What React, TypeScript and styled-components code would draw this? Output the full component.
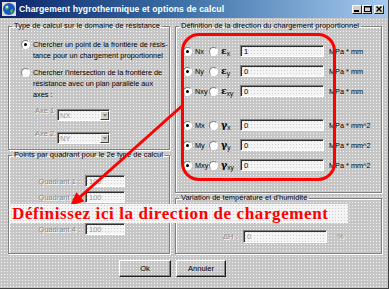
import styled, { createGlobalStyle } from "styled-components";

const GlobalStyle = createGlobalStyle`
  html, body {
    margin: 0;
    padding: 0;
    background: #c8c8c8;
  }
  body {
    font-family: "Liberation Sans", Arial, sans-serif;
    font-size: 7.5px;
    color: #000;
  }
`;

const dither = `
  background-color: #c6c6c6;
  background-image: radial-gradient(circle, #f4f4f4 0.6px, transparent 0.9px);
  background-size: 3px 3px;
`;

const whiteDither = `
  background-color: #f4f4f4;
  background-image: radial-gradient(circle, #d0d0d0 0.5px, transparent 0.8px);
  background-size: 3px 3px;
`;

const Window = styled.div`
  position: relative;
  width: 389px;
  height: 289px;
  box-sizing: border-box;
  border-right: 1px solid #404040;
  border-bottom: 1px solid #404040;
  overflow: hidden;
  display: flex;
  flex-direction: column;
  ${dither}
`;

const TitleBar = styled.div`
  height: 18px;
  display: flex;
  align-items: center;
  gap: 3px;
  padding: 0 3px 0 2px;
  background: linear-gradient(90deg, #0a246a 0%, #3a6ea5 45%, #a6caf0 100%);
`;

const Title = styled.span`
  flex: 1;
  color: #fff;
  font-weight: bold;
  font-size: 8.6px;
  letter-spacing: 0.1px;
`;

const CaptionGroup = styled.div`
  display: flex;
  gap: 2px;
  margin-right: 1px;
`;

const CaptionPair = styled.div`
  display: flex;
`;

const CaptionButton = styled.div`
  width: 10px;
  height: 9px;
  box-sizing: border-box;
  display: flex;
  align-items: center;
  justify-content: center;
  border-top: 1px solid #fff;
  border-left: 1px solid #fff;
  border-right: 1px solid #202020;
  border-bottom: 1px solid #202020;
  background: #d4d0c8;
`;

const Body = styled.div`
  display: grid;
  grid-template-columns: 162px 207px;
  column-gap: 5px;
  padding: 3px 0 0 8px;
`;

const Column = styled.div`
  display: flex;
  flex-direction: column;
`;

const GroupBox = styled.fieldset<{ $h: number }>`
  margin: 0;
  padding: 0;
  min-width: 0;
  height: ${(p) => p.$h}px;
  box-sizing: border-box;
  border: 1px solid #808080;
  box-shadow: inset 1px 1px 0 #fff, 1px 1px 0 #fff;
`;

const Legend = styled.legend`
  margin-left: 3px;
  padding: 0 2px;
  line-height: 10px;
  font-size: 7.5px;
`;

const GroupInner = styled.div<{ $top: number; $left: number }>`
  display: flex;
  flex-direction: column;
  padding: ${(p) => p.$top}px 0 0 ${(p) => p.$left}px;
`;

const Option = styled.div<{ $mt?: number }>`
  display: grid;
  grid-template-columns: 9px 1fr;
  column-gap: 3px;
  align-items: start;
  margin-top: ${(p) => p.$mt ?? 0}px;
  line-height: 11px;
  font-size: 7.3px;
`;

const Radio = styled.span<{ $on?: boolean }>`
  display: inline-flex;
  align-items: center;
  justify-content: center;
  width: 9px;
  height: 9px;
  box-sizing: border-box;
  border-radius: 50%;
  border: 1px solid;
  border-color: #808080 #fff #fff #808080;
  background: #fff;
  margin-top: 1px;
  &::after {
    content: "";
    width: 3px;
    height: 3px;
    border-radius: 50%;
    background: ${(p) => (p.$on ? "#000" : "transparent")};
  }
`;

const AxeRow = styled.div<{ $mt: number }>`
  display: flex;
  align-items: center;
  margin-top: ${(p) => p.$mt}px;
  padding-left: 14px;
`;

const DisabledLabel = styled.span<{ $w?: number; $right?: boolean; $ml?: number }>`
  color: #8a8a8a;
  text-shadow: 1px 1px 0 #fff;
  width: ${(p) => (p.$w ? `${p.$w}px` : "auto")};
  text-align: ${(p) => (p.$right ? "right" : "left")};
  margin-left: ${(p) => p.$ml ?? 0}px;
  flex-shrink: 0;
`;

const sunken = `
  box-sizing: border-box;
  border-top: 1px solid #808080;
  border-left: 1px solid #808080;
  border-right: 1px solid #fff;
  border-bottom: 1px solid #fff;
  box-shadow: inset 1px 1px 0 #303030;
`;

const Combo = styled.div`
  ${sunken}
  ${whiteDither}
  width: 53px;
  height: 12px;
  display: flex;
  align-items: center;
  justify-content: space-between;
  padding-left: 2px;
  color: #9a9a9a;
`;

const ComboArrow = styled.span`
  width: 9px;
  height: 9px;
  box-sizing: border-box;
  display: flex;
  align-items: center;
  justify-content: center;
  border-top: 1px solid #fff;
  border-left: 1px solid #fff;
  border-right: 1px solid #404040;
  border-bottom: 1px solid #404040;
  background: #d4d0c8;
  &::after {
    content: "";
    border-left: 2.5px solid transparent;
    border-right: 2.5px solid transparent;
    border-top: 3px solid #808080;
  }
`;

const QuadRow = styled.div<{ $mt: number }>`
  display: flex;
  align-items: center;
  gap: 5px;
  height: 12px;
  margin-top: ${(p) => p.$mt}px;
`;

const Field = styled.div<{ $w: number; $h?: number; $disabled?: boolean }>`
  ${sunken}
  ${whiteDither}
  width: ${(p) => p.$w}px;
  height: ${(p) => p.$h ?? 12}px;
  flex-shrink: 0;
  padding-left: 3px;
  display: flex;
  align-items: center;
  font-size: 7.5px;
  color: ${(p) => (p.$disabled ? "#9a9a9a" : "#000")};
`;

const LoadList = styled.div`
  display: flex;
  flex-direction: column;
  gap: 8px;
`;

const LoadRow = styled.div<{ $mt?: number }>`
  display: grid;
  grid-template-columns: 9px 17px 9px 22px 84px auto;
  align-items: center;
  height: 12px;
  margin-top: ${(p) => p.$mt ?? 0}px;
`;

const RadioCell = styled(Radio)`
  margin-top: 0;
`;

const LoadLabel = styled.span`
  padding-left: 3px;
  font-size: 7.3px;
`;

const Symbol = styled.span`
  padding-left: 3px;
  font-family: "DejaVu Serif", "Liberation Serif", serif;
  font-size: 9.5px;
  font-weight: bold;
  sub {
    font-family: "Liberation Sans", Arial, sans-serif;
    font-weight: normal;
    font-size: 6.5px;
    vertical-align: -2px;
  }
`;

const Unit = styled.span`
  padding-left: 5px;
  font-size: 7.3px;
  white-space: nowrap;
`;

const TempRow = styled.div`
  display: flex;
  align-items: center;
`;

const ButtonRow = styled.div`
  display: flex;
  gap: 5px;
  padding-left: 119px;
  margin-top: 6px;
`;

const Button = styled.button<{ $w: number }>`
  width: ${(p) => p.$w}px;
  height: 17px;
  padding: 0;
  font-family: "Liberation Sans", Arial, sans-serif;
  font-size: 7.5px;
  color: #000;
  box-sizing: border-box;
  border-top: 1px solid #fff;
  border-left: 1px solid #fff;
  border-right: 1px solid #202020;
  border-bottom: 1px solid #202020;
  box-shadow: inset -1px -1px 0 #808080;
  background: transparent;
`;

const Highlight = styled.div`
  position: absolute;
  left: 181px;
  top: 33px;
  width: 155px;
  height: 148px;
  box-sizing: border-box;
  border: 3px solid #ff0000;
  border-radius: 18px;
  pointer-events: none;
`;

const Arrow = styled.svg`
  position: absolute;
  left: 0;
  top: 0;
  pointer-events: none;
`;

const Callout = styled.div`
  position: absolute;
  left: 10px;
  top: 204px;
  width: 338px;
  height: 19px;
  padding-left: 2px;
  box-sizing: border-box;
  ${whiteDither}
  color: #ff0000;
  font-family: "Liberation Serif", "Times New Roman", serif;
  font-weight: bold;
  font-size: 17px;
  letter-spacing: 0.6px;
  line-height: 19px;
  white-space: nowrap;
`;

const AppIcon = () => (
  <svg width="14" height="14" viewBox="0 0 14 14">
    <rect x="0" y="0" width="14" height="14" fill="#dcdcdc" />
    <circle cx="7" cy="7" r="6" fill="#1b55c9" />
    <path d="M3 4 L6 3 L7 6 L5 8 L3 7 Z" fill="#3ab54a" />
    <path d="M8 8 L11 7 L11 10 L9 12 Z" fill="#3ab54a" />
    <circle cx="5" cy="5" r="1.2" fill="#fff" opacity="0.7" />
  </svg>
);

const loads = [
  { a: "Nx", s: "ε", i: "x", v: "1", u: "MPa * mm" },
  { a: "Ny", s: "ε", i: "y", v: "0", u: "MPa * mm" },
  { a: "Nxy", s: "ε", i: "xy", v: "0", u: "MPa * mm" },
  { a: "Mx", s: "γ", i: "x", v: "0", u: "MPa * mm^2" },
  { a: "My", s: "γ", i: "y", v: "0", u: "MPa * mm^2" },
  { a: "Mxy", s: "γ", i: "xy", v: "0", u: "MPa * mm^2" },
];

// Quadrant 3 lies under the callout in the screenshot, so its row stays empty
const quadrants = ["Quadrant 1 :", "Quadrant 2 :", "", "Quadrant 4 :"];

export default function App() {
  return (
    <Window>
      <GlobalStyle />
      <TitleBar>
        <AppIcon />
        <Title>Chargement hygrothermique et options de calcul</Title>
        <CaptionGroup>
          <CaptionPair>
            <CaptionButton>
              <svg width="6" height="6" viewBox="0 0 6 6">
                <rect x="0" y="4" width="5" height="2" fill="#000" />
              </svg>
            </CaptionButton>
            <CaptionButton>
              <svg width="7" height="6" viewBox="0 0 7 6">
                <rect x="0.5" y="0.5" width="6" height="5" fill="none" stroke="#000" />
                <rect x="0" y="0" width="7" height="1.5" fill="#000" />
              </svg>
            </CaptionButton>
          </CaptionPair>
          <CaptionButton>
            <svg width="6" height="6" viewBox="0 0 6 6">
              <path d="M0.5 0.5 L5.5 5.5 M5.5 0.5 L0.5 5.5" stroke="#000" strokeWidth="1.4" />
            </svg>
          </CaptionButton>
        </CaptionGroup>
      </TitleBar>

      <Body>
        <Column>
          <GroupBox $h={129}>
            <Legend>Type de calcul sur le domaine de résistance</Legend>
            <GroupInner $top={8} $left={12}>
              <Option>
                <Radio $on />
                <span>
                  Chercher un point de la frontière de résis-
                  <br />
                  tance pour un chargement proportionnel
                </span>
              </Option>
              <Option $mt={6}>
                <Radio />
                <span>
                  Chercher l'intersection de la frontière de
                  <br />
                  résistance avec un plan parallèle aux
                  <br />
                  axes :
                </span>
              </Option>
              <AxeRow $mt={6}>
                <DisabledLabel $w={22}>Axe 1 :</DisabledLabel>
                <Combo>
                  NX
                  <ComboArrow />
                </Combo>
              </AxeRow>
              <AxeRow $mt={5}>
                <DisabledLabel $w={22}>Axe 2 :</DisabledLabel>
                <Combo>
                  NY
                  <ComboArrow />
                </Combo>
              </AxeRow>
            </GroupInner>
          </GroupBox>
          <GroupBox $h={104}>
            <Legend>Points par quadrant pour le 2e type de calcul</Legend>
            <GroupInner $top={15} $left={0}>
              {quadrants.map((q, i) => (
                <QuadRow key={i} $mt={i === 0 ? 0 : 4}>
                  {q && (
                    <>
                      <DisabledLabel $w={71} $right>
                        {q}
                      </DisabledLabel>
                      <Field $w={40} $disabled>
                        100
                      </Field>
                    </>
                  )}
                </QuadRow>
              ))}
            </GroupInner>
          </GroupBox>
        </Column>

        <Column>
          <GroupBox $h={172}>
            <Legend>Définition de la direction du chargement proportionnel</Legend>
            <GroupInner $top={14} $left={7}>
              <LoadList>
                {loads.map((l, i) => (
                  <LoadRow key={l.a} $mt={i === 3 ? 14 : 0}>
                    <RadioCell $on />
                    <LoadLabel>{l.a}</LoadLabel>
                    <RadioCell />
                    <Symbol>
                      {l.s}
                      <sub>{l.i}</sub>
                    </Symbol>
                    <Field $w={84}>{l.v}</Field>
                    <Unit>{l.u}</Unit>
                  </LoadRow>
                ))}
              </LoadList>
            </GroupInner>
          </GroupBox>
          <GroupBox $h={61}>
            <Legend>Variation de température et d'humidité</Legend>
            <GroupInner $top={27} $left={47}>
              <TempRow>
                <DisabledLabel $w={20}>ΔH :</DisabledLabel>
                <Field $w={84} $h={13} $disabled>
                  0
                </Field>
                <DisabledLabel $ml={10}>%</DisabledLabel>
              </TempRow>
            </GroupInner>
          </GroupBox>
        </Column>
      </Body>

      <ButtonRow>
        <Button $w={52}>Ok</Button>
        <Button $w={50}>Annuler</Button>
      </ButtonRow>

      <Highlight />
      <Arrow width="389" height="289" viewBox="0 0 389 289">
        <line x1="183" y1="105" x2="80" y2="197" stroke="#ff0000" strokeWidth="3" />
        <polygon points="70,206 84.4,201.2 76.4,192.2" fill="#ff0000" />
      </Arrow>
      <Callout>Définissez ici la direction de chargement</Callout>
    </Window>
  );
}
